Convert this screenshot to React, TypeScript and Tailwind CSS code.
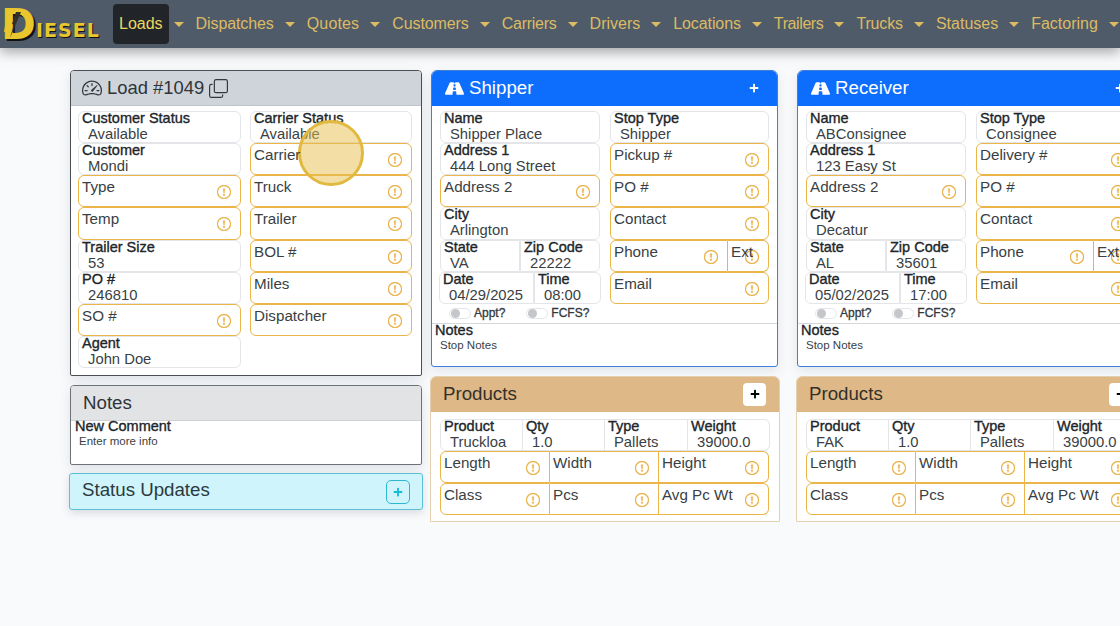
import { BsCopy, BsExclamationCircle, BsSpeedometer2 } from "react-icons/bs";
import { FaPlus, FaRoad } from "react-icons/fa";

const navItems = [
  { label: "Loads", fit: "" },
  { label: "Dispatches", fit: "tracking-[-0.1px]" },
  { label: "Quotes", fit: "tracking-[0.15px]" },
  { label: "Customers", fit: "tracking-[-0.1px]" },
  { label: "Carriers", fit: "tracking-[-0.25px]" },
  { label: "Drivers", fit: "" },
  { label: "Locations", fit: "tracking-[-0.1px]" },
  { label: "Trailers", fit: "tracking-[-0.4px]" },
  { label: "Trucks", fit: "tracking-[-0.15px]" },
  { label: "Statuses", fit: "" },
  { label: "Factoring", fit: "" },
];

// read-only field: bold label over an indented value
function Info({ label, value, className = "" }: { label: string; value: string; className?: string }) {
  return (
    <div className={`h-[32.15px] border border-[#e3e5e8] rounded-md pl-[3px] overflow-hidden bg-white ${className}`}>
      <div className="text-[14.5px] leading-[15px] -mt-px text-[#212529] [-webkit-text-stroke:0.35px_#212529] whitespace-nowrap">{label}</div>
      <div className="text-[14.8px] leading-[17px] text-[#3a3f44] pl-[6px] whitespace-nowrap">{value}</div>
    </div>
  );
}

// empty field with the orange warning outline
function Warn({ label, className = "" }: { label: string; className?: string }) {
  return (
    <div className={`relative h-[32.15px] border border-[#ebb54a] rounded-md pl-[3px] bg-white ${className}`}>
      <div className="text-[15.2px] leading-[18px] text-[#3a3f44] pt-[2px] relative z-10 whitespace-nowrap">{label}</div>
      <BsExclamationCircle className="absolute right-[9px] top-[9px] text-[#e9ad3c] text-[14px]" stroke="currentColor" strokeWidth={0.4} />
    </div>
  );
}

function Toggle({ label }: { label: string }) {
  return (
    <div className="flex items-center gap-[3px]">
      <div className="w-[22px] h-[11px] rounded-full border border-[#e3e5e8] bg-white flex items-center pl-[1px]">
        <div className="w-[9px] h-[9px] rounded-full bg-[#c4c6c9]" />
      </div>
      <span className="text-[12px] text-[#33383d] [-webkit-text-stroke:0.3px_#33383d] leading-none">{label}</span>
    </div>
  );
}

type Stop = {
  title: string;
  name: string;
  stopType: string;
  address: string;
  numberLabel: string;
  city: string;
  state: string;
  zip: string;
  date: string;
  time: string;
  product: string;
};

function StopCard({ stop }: { stop: Stop }) {
  return (
    <div className="w-[347px] h-[297px] rounded-t-md rounded-b-[3px] border border-[#3d7fd9] bg-white shadow-[0_4px_12px_rgba(60,80,110,0.12)] overflow-hidden">
      <div className="h-[36px] -mt-px -mx-px bg-[#0d6efd] flex items-center pl-[14px] pr-[19px] text-white">
        <FaRoad className="text-[19px] mr-[5px]" />
        <span className="text-[18.7px]">{stop.title}</span>
        <FaPlus className="ml-auto text-[10px]" />
      </div>
      <div className="pl-[8px] pr-[8px] pt-[5px] flex gap-[10px]">
        <div className="w-[160px]">
          <Info label="Name" value={stop.name} />
          <Info label="Address 1" value={stop.address} />
          <Warn label="Address 2" />
          <Info label="City" value={stop.city} />
          <div className="flex">
            <Info label="State" value={stop.state} className="w-[80px] rounded-r-none" />
            <Info label="Zip Code" value={stop.zip} className="flex-1 rounded-l-none" />
          </div>
          <div className="flex w-[162px] -ml-px">
            <Info label="Date" value={stop.date} className="w-[95px] rounded-r-none" />
            <Info label="Time" value={stop.time} className="flex-1 rounded-l-none" />
          </div>
        </div>
        <div className="w-[159px]">
          <Info label="Stop Type" value={stop.stopType} />
          <Warn label={stop.numberLabel} />
          <Warn label="PO #" />
          <Warn label="Contact" />
          <div className="flex">
            <Warn label="Phone" className="w-[118px] rounded-r-none" />
            <Warn label="Ext" className="flex-1 rounded-l-none border-l-0" />
          </div>
          <Warn label="Email" />
        </div>
      </div>
      <div className="flex pl-[17px] gap-[21px] h-[19px] items-center">
        <Toggle label="Appt?" />
        <Toggle label="FCFS?" />
      </div>
      <div className="border-t border-[#d5d7da] pl-[3px]">
        <div className="text-[14.5px] leading-[15px] -mt-px text-[#212529] [-webkit-text-stroke:0.35px_#212529]">Notes</div>
        <div className="text-[11.5px] leading-[15px] text-[#3a3f44] pl-[5px]">Stop Notes</div>
      </div>
    </div>
  );
}

function ProductCard({ product }: { product: string }) {
  return (
    <div className="w-[350px] h-[146px] rounded-t-md border border-[#e4cfae] bg-white overflow-hidden">
      <div className="h-[36px] -mt-px -mx-px bg-[#deb887] flex items-center pl-[13px] pr-[14px]">
        <span className="text-[18.7px] text-[#33302a]">Products</span>
        <div className="ml-auto w-[23px] h-[23px] rounded-[4px] bg-white flex items-center justify-center">
          <FaPlus className="text-[10px] text-black" />
        </div>
      </div>
      <div className="px-[9px] pt-[7px]">
        <div className="flex w-[330px]">
          <Info label="Product" value={product} className="w-[83px] rounded-r-none" />
          <Info label="Qty" value="1.0" className="w-[82px] rounded-none border-l-0" />
          <Info label="Type" value="Pallets" className="w-[83px] rounded-none border-l-0" />
          <Info label="Weight" value="39000.0" className="w-[82px] rounded-l-none border-l-0" />
        </div>
        <div className="flex w-[329px]">
          <Warn label="Length" className="w-[110px] rounded-r-none" />
          <Warn label="Width" className="w-[109px] rounded-none border-l-0" />
          <Warn label="Height" className="w-[110px] rounded-l-none border-l-0" />
        </div>
        <div className="flex w-[329px]">
          <Warn label="Class" className="w-[110px] rounded-r-none" />
          <Warn label="Pcs" className="w-[109px] rounded-none border-l-0" />
          <Warn label="Avg Pc Wt" className="w-[110px] rounded-l-none border-l-0" />
        </div>
      </div>
    </div>
  );
}

const shipper: Stop = {
  title: "Shipper",
  name: "Shipper Place",
  stopType: "Shipper",
  address: "444 Long Street",
  numberLabel: "Pickup #",
  city: "Arlington",
  state: "VA",
  zip: "22222",
  date: "04/29/2025",
  time: "08:00",
  product: "Truckloa",
};

const receiver: Stop = {
  title: "Receiver",
  name: "ABConsignee",
  stopType: "Consignee",
  address: "123 Easy St",
  numberLabel: "Delivery #",
  city: "Decatur",
  state: "AL",
  zip: "35601",
  date: "05/02/2025",
  time: "17:00",
  product: "FAK",
};

export default function App() {
  return (
    <div className="relative w-[1120px] h-[626px] overflow-hidden bg-[#f9fafb] font-['Liberation_Sans',Arial,sans-serif]">
      {/* Navbar */}
      <nav className="h-[48px] bg-[#4f5b69] flex items-center shadow-[0_4px_12px_rgba(0,0,0,0.35)] whitespace-nowrap">
        <div className="w-[113px] h-full shrink-0 relative font-['DejaVu_Sans',sans-serif] font-bold text-[#e8c62e] [text-shadow:2px_2px_0_#111]">
          <span className="absolute left-[1px] top-[1px] text-[42px] leading-[48px]">D</span>
          <svg className="absolute left-[2px] top-[5px]" width="30" height="36" viewBox="0 0 30 36">
            <path d="M19 7 8 33l4-14h-2l4-12z" fill="#33302a" />
            <path d="M3 21h5l-1 6H2z" fill="#e8c62e" />
          </svg>
          <span className="absolute left-[36px] top-[20px] text-[19px] leading-[20px] tracking-[1px] [text-shadow:1px_1px_0_#111]">IESEL</span>
        </div>
        {navItems.map((item, i) => (
          <div key={item.label} className="flex items-center h-full shrink-0">
            <a className={`h-[40px] px-[6px] flex items-center text-[16px] rounded-[4px] ${item.fit} ${i === 0 ? "bg-[#212529] text-[#ecd860]" : "text-[#dcbb63]"}`}>{item.label}</a>
            <span className="ml-[5px] mr-[6px] w-0 h-0 border-x-[5px] border-x-transparent border-t-[5px] border-t-[#dcbb63]" />
          </div>
        ))}
      </nav>

      {/* Main columns */}
      <div className="flex pt-[22px] pl-[69px]">
        <div className="w-[354px] shrink-0">
          <div className="ml-px w-[352px] h-[306px] rounded-t-[4px] rounded-b-[2px] border border-[#4a4f55] bg-white shadow-[0_4px_12px_rgba(60,80,110,0.14)] overflow-hidden">
            <div className="h-[35px] bg-[#ced4da] border-b border-[#bfc4ca] flex items-center pl-[11px] text-[#33383d]">
              <BsSpeedometer2 className="text-[20px] mr-[5px]" />
              <span className="text-[18.4px] text-[#2f3439]">Load #1049</span>
              <BsCopy className="text-[19px] ml-[5px]" />
            </div>
            <div className="pl-[7px] pt-[5px] flex gap-[9px]">
              <div className="w-[163px]">
                <Info label="Customer Status" value="Available" />
                <Info label="Customer" value="Mondi" />
                <Warn label="Type" />
                <Warn label="Temp" />
                <Info label="Trailer Size" value="53" />
                <Info label="PO #" value="246810" />
                <Warn label="SO #" />
                <Info label="Agent" value="John Doe" />
              </div>
              <div className="w-[162px]">
                <Info label="Carrier Status" value="Available" />
                <Warn label="Carrier" />
                <Warn label="Truck" />
                <Warn label="Trailer" />
                <Warn label="BOL #" />
                <Warn label="Miles" />
                <Warn label="Dispatcher" />
              </div>
            </div>
          </div>

          <div className="ml-px mt-[9px] w-[352px] h-[80px] rounded-t-[4px] rounded-b-[2px] border border-[#6d7278] bg-white shadow-[0_4px_12px_rgba(60,80,110,0.14)] overflow-hidden">
            <div className="h-[35px] bg-[#e2e3e5] border-b border-[#cfd1d4] flex items-center pl-[12px]">
              <span className="text-[18.7px] text-[#2f3439]">Notes</span>
            </div>
            <div className="pl-[4px] -mt-[2px]">
              <div className="text-[14.5px] leading-[15px] text-[#212529] [-webkit-text-stroke:0.35px_#212529]">New Comment</div>
              <div className="text-[11.5px] leading-[15px] text-[#3a3f44] pl-[4px]">Enter more info</div>
            </div>
          </div>

          <div className="mt-[8px] w-[354px] h-[37px] rounded-[3px] border border-[#5cc0d4] bg-[#cff4fc] shadow-[0_3px_8px_rgba(60,80,110,0.18)] flex items-center pl-[12px] pr-[12px]">
            <span className="text-[18.7px] text-[#2b3a40] -mt-[2px]">Status Updates</span>
            <div className="ml-auto w-[24px] h-[24px] rounded-[5px] border border-[#2fb8d6] flex items-center justify-center">
              <FaPlus className="text-[10px] text-[#14bcdc]" />
            </div>
          </div>
        </div>

        <div className="ml-[7px] w-[366px] shrink-0">
          <div className="ml-px"><StopCard stop={shipper} /></div>
          <div className="mt-[9px]"><ProductCard product={shipper.product} /></div>
        </div>

        <div className="w-[366px] shrink-0">
          <div className="ml-px"><StopCard stop={receiver} /></div>
          <div className="mt-[9px]"><ProductCard product={receiver.product} /></div>
        </div>
      </div>

      {/* Click highlight */}
      <div className="absolute left-[298px] top-[120px] w-[66px] h-[66px] rounded-full border-[3px] border-[#e2b93f] bg-[#e7c04c]/50" />
    </div>
  );
}
